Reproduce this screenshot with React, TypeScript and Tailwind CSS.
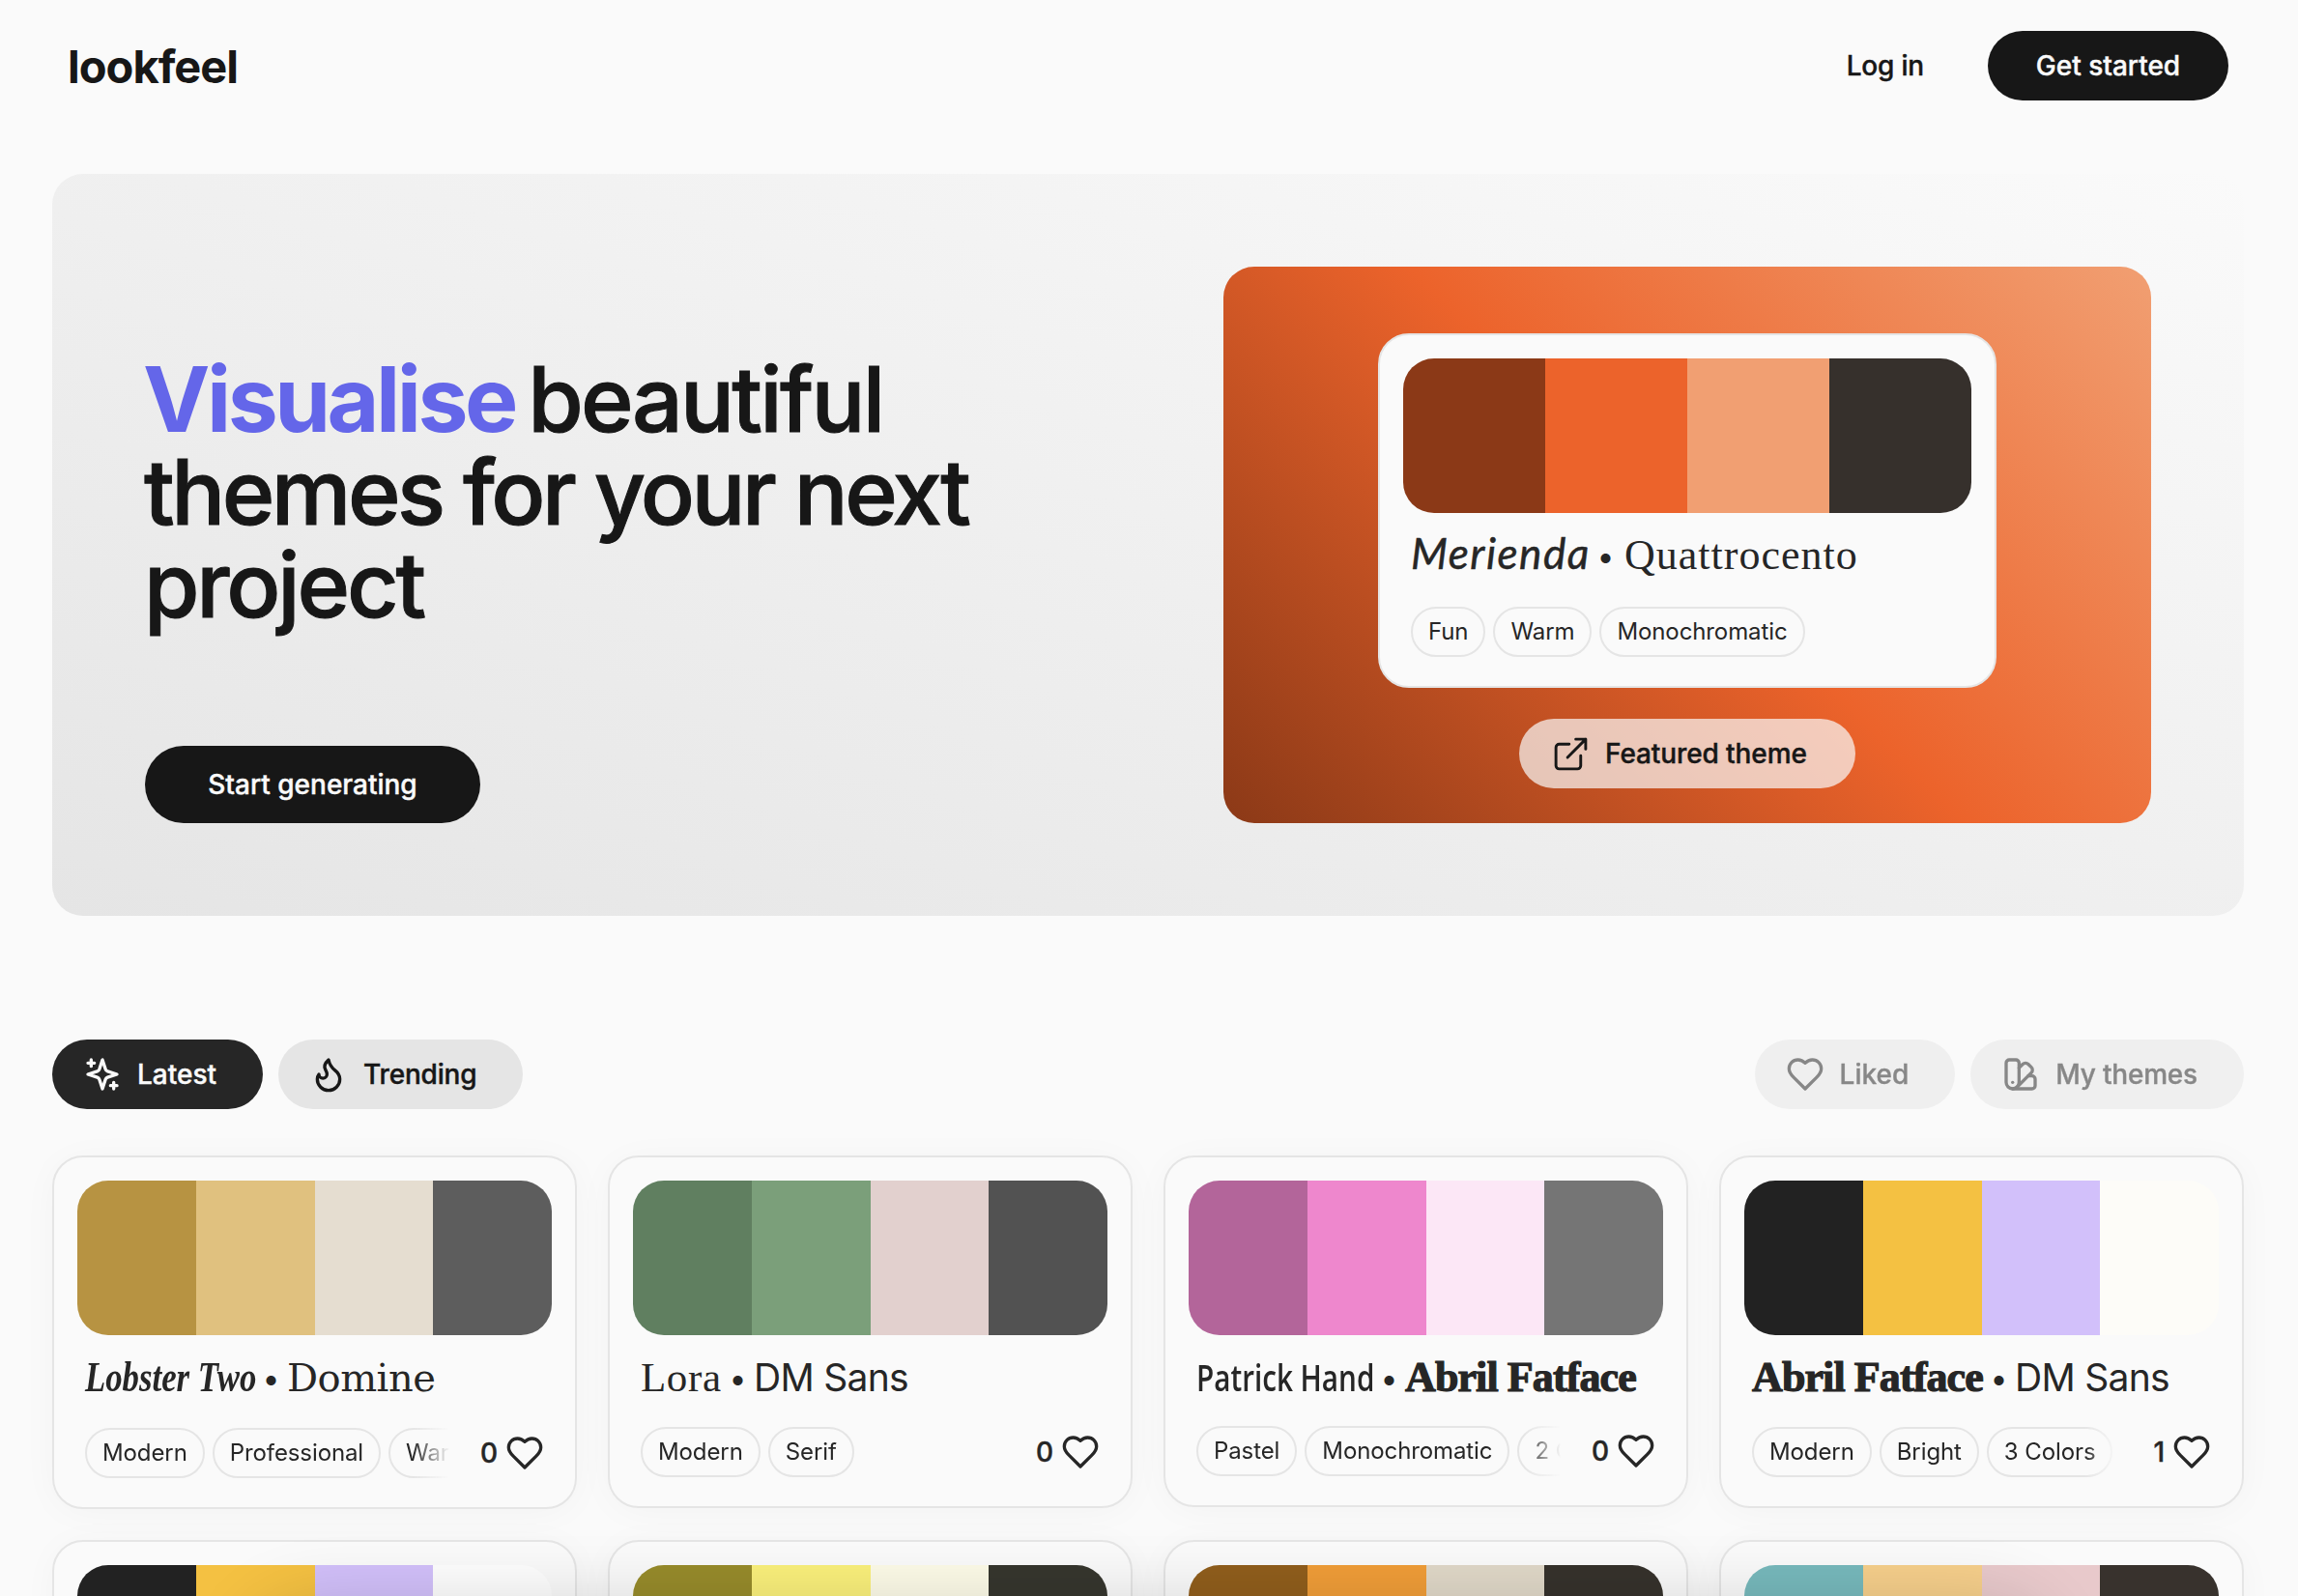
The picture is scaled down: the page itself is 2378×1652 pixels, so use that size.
import type { ReactNode } from "react";

function Icon({ children, look = "size-10", stroke = 2 }: { children: ReactNode; look?: string; stroke?: number }) {
  return (
    <svg
      viewBox="0 0 24 24"
      className={`shrink-0 ${look}`}
      fill="none"
      stroke="currentColor"
      strokeWidth={stroke}
      strokeLinecap="round"
      strokeLinejoin="round"
    >
      {children}
    </svg>
  );
}

const HeartIcon = () => (
  <Icon>
    <path d="M19 14c1.49-1.46 3-3.21 3-5.5A5.5 5.5 0 0 0 16.5 3c-1.76 0-3 .5-4.5 2-1.5-1.5-2.74-2-4.5-2A5.5 5.5 0 0 0 2 8.5c0 2.3 1.5 4.05 3 5.5l7 7Z" />
  </Icon>
);

const SparklesIcon = () => (
  <Icon>
    <path d="m12 3-1.9 5.8a2 2 0 0 1-1.287 1.288L3 12l5.8 1.9a2 2 0 0 1 1.288 1.287L12 21l1.9-5.8a2 2 0 0 1 1.287-1.288L21 12l-5.8-1.9a2 2 0 0 1-1.288-1.287Z" />
    <path d="M5 3v4M19 17v4M3 5h4M17 19h4" />
  </Icon>
);

const FlameIcon = () => (
  <Icon>
    <path d="M8.5 14.5A2.5 2.5 0 0 0 11 12c0-1.38-.5-2-1-3-1.072-2.143-.224-4.054 2-6 .5 2.5 2 4.9 4 6.5 2 1.6 3 3.5 3 5.5a7 7 0 1 1-14 0c0-1.153.433-2.294 1-3a2.5 2.5 0 0 0 2.5 2.5z" />
  </Icon>
);

const SwatchIcon = () => (
  <Icon>
    <path d="M11 17a4 4 0 0 1-8 0V5a2 2 0 0 1 2-2h4a2 2 0 0 1 2 2Z" />
    <path d="M16.7 13H19a2 2 0 0 1 2 2v4a2 2 0 0 1-2 2H7" />
    <path d="M7 17h.01" />
    <path d="m11 8 2.3-2.3a2.4 2.4 0 0 1 3.404.004L18.6 7.6a2.4 2.4 0 0 1 .026 3.434L9.9 19.8" />
  </Icon>
);

const ExternalIcon = () => (
  <Icon look="size-[41px]" stroke={1.7}>
    <path d="M15 3h6v6M10 14 21 3M18 13v6a2 2 0 0 1-2 2H5a2 2 0 0 1-2-2V8a2 2 0 0 1 2-2h6" />
  </Icon>
);

/* Display faces used inside the theme names. */
const merienda = (
  <span className="w-[185px] font-['Lato',sans-serif] text-[44px] italic tracking-[1.5px] [-webkit-text-stroke:0.5px]">
    Merienda
  </span>
);
const quattrocento = (
  <span className="ml-[3px] font-['Liberation_Serif',serif] text-[44px] tracking-[1px]">Quattrocento</span>
);
const lobster = (
  <span className="w-[176px]">
    <span className="inline-block origin-left scale-x-[.79] font-['Liberation_Serif',serif] text-[44px] font-bold italic">
      Lobster Two
    </span>
  </span>
);
const domine = (
  <span className="font-['DejaVu_Serif',serif] text-[40px] tracking-[-0.5px]">Domine</span>
);
const lora = (
  <span className="w-[84px] font-['Liberation_Serif',serif] text-[43px] tracking-[0.6px]">Lora</span>
);
const dmSans = <span className="text-[39px] tracking-[-0.7px]">DM Sans</span>;
const patrick = (
  <span className="w-[183px]">
    <span className="inline-block origin-left scale-x-[.78] font-['Open_Sans',sans-serif] text-[38px] font-semibold">
      Patrick Hand
    </span>
  </span>
);
const abril = (
  <span className="w-[239px] font-['Liberation_Serif',serif] text-[44px] font-bold tracking-[-0.9px] [-webkit-text-stroke:1.2px]">
    Abril Fatface
  </span>
);

function Swatches({ colors }: { colors: string[] }) {
  return (
    <div className="flex h-40 overflow-hidden rounded-[32px]">
      {colors.map((c, i) => (
        <div key={i} className="flex-1" style={{ backgroundColor: c }} />
      ))}
    </div>
  );
}

function Names({ first, second, height }: { first: ReactNode; second: ReactNode; height: string }) {
  return (
    <div className={`mt-[7px] flex items-baseline px-2 whitespace-nowrap leading-[40px] ${height}`}>
      {first}
      <span className="w-[33px] shrink-0 -translate-y-0.5 text-center text-[32px] leading-[79px]">•</span>
      {second}
    </div>
  );
}

function Chip({ children }: { children: ReactNode }) {
  return (
    <span className="flex h-[52px] shrink-0 items-center rounded-full border-2 border-neutral-200 px-4 text-2xl tracking-[-0.1px] whitespace-nowrap">
      {children}
    </span>
  );
}

type Theme = {
  colors: string[];
  first?: ReactNode;
  second?: ReactNode;
  height?: string;
  tags?: string[];
  likes?: number;
};

const themes: Theme[] = [
  { colors: ["#b79342", "#e0c17f", "#e5ddd0", "#5d5d5d"], first: lobster, second: domine, height: "h-[81px]", tags: ["Modern", "Professional", "Warm"], likes: 0 },
  { colors: ["#607f60", "#7b9f7a", "#e2d0ce", "#525252"], first: lora, second: dmSans, height: "h-[80px]", tags: ["Modern", "Serif"], likes: 0 },
  { colors: ["#b3659a", "#ee87cd", "#fce7f6", "#757575"], first: patrick, second: abril, height: "h-[79px]", tags: ["Pastel", "Monochromatic", "2 Colors"], likes: 0 },
  { colors: ["#222222", "#f4c142", "#d2c0fa", "#fdfcf8"], first: abril, second: dmSans, height: "h-[80px]", tags: ["Modern", "Bright", "3 Colors"], likes: 1 },
  { colors: ["#222222", "#f4c142", "#d2c0fa", "#fefefe"] },
  { colors: ["#978b2b", "#faf07b", "#fdfbe8", "#36362e"] },
  { colors: ["#905e1c", "#f09d38", "#e0d8c8", "#36322c"] },
  { colors: ["#77b9bc", "#f6cf8b", "#e8c9cb", "#38322d"] },
];

function ThemeCard({ colors, first, second, height, tags, likes }: Theme) {
  return (
    <article className="min-h-[364px] rounded-[32px] border-2 border-neutral-200 bg-neutral-50 p-6 pb-[30px] shadow-[0_4px_40px_-4px_rgba(0,0,0,0.04)]">
      <Swatches colors={colors} />
      {tags && (
        <>
          <Names first={first} second={second} height={height ?? "h-[80px]"} />
          <div className="mt-2 flex items-center px-2">
            <div className="flex min-w-0 flex-1 gap-2 overflow-hidden [mask-image:linear-gradient(to_right,black_90%,transparent)]">
              {tags.map((t) => (
                <Chip key={t}>{t}</Chip>
              ))}
            </div>
            <div className="ml-8 flex items-center gap-2 text-[28px] font-medium [-webkit-text-stroke:0.4px]">
              {likes}
              <HeartIcon />
            </div>
          </div>
        </>
      )}
    </article>
  );
}

function Tab({ icon, label, look }: { icon: ReactNode; label: string; look: string }) {
  return (
    <button
      className={`flex h-[72px] items-center gap-4 rounded-full pr-12 pl-8 text-[28px] font-medium [-webkit-text-stroke:0.4px] ${look}`}
    >
      {icon}
      {label}
    </button>
  );
}

export default function App() {
  return (
    <div className="relative h-[1652px] overflow-hidden bg-neutral-50 font-['Inter',sans-serif] text-neutral-800">
      <header className="flex h-[180px] items-start justify-between pt-8 pr-[72px] pl-[70px]">
        <div className="flex h-[74px] items-center text-[47px] font-bold tracking-[-1px] text-neutral-900">lookfeel</div>
        <nav className="flex items-center gap-[66px] text-[28px] font-medium [-webkit-text-stroke:0.4px]">
          <a className="tracking-[-0.2px] text-neutral-900">Log in</a>
          <button className="h-[72px] w-[249px] rounded-full bg-neutral-900 text-neutral-50">Get started</button>
        </nav>
      </header>

      <main className="pr-14 pl-[54px]">
        <section className="flex h-[768px] justify-between rounded-[32px] bg-[linear-gradient(to_top_right,#e5e5e5,#fafafa)] p-24">
          <div className="flex flex-col items-start justify-end">
            <h1 className="mb-[119px] -ml-px text-[93px] leading-[96px] font-medium tracking-[-3.5px] text-neutral-900 [-webkit-text-stroke:1px]">
              <span className="mr-[-8px] -ml-px font-bold tracking-[-3.5px] text-[#6466e9] [-webkit-text-stroke:0px]">
                Visualise
              </span>{" "}
              <span className="tracking-[-2.7px]">beautiful</span>
              <br />
              themes for your next
              <br />
              <span className="tracking-[-3.2px]">project</span>
            </h1>
            <button className="h-20 w-[347px] rounded-full bg-neutral-900 text-[28px] font-medium text-neutral-50 [-webkit-text-stroke:0.4px]">
              Start generating
            </button>
          </div>

          <div className="flex w-[960px] flex-col items-center rounded-[32px] bg-[linear-gradient(45deg,#8b3917,#ec632b_50%,#f19f72)] pt-[69px]">
            <div className="h-[367px] w-[640px] rounded-[32px] border-2 border-neutral-200 bg-neutral-50 p-6">
              <Swatches colors={["#8b3917", "#ec632b", "#f19f72", "#36302c"]} />
              <Names first={merienda} second={quattrocento} height="h-[82px]" />
              <div className="mt-2 flex gap-2 px-2">
                <Chip>Fun</Chip>
                <Chip>Warm</Chip>
                <Chip>Monochromatic</Chip>
              </div>
            </div>
            <button className="mt-8 flex h-[72px] w-[348px] items-center gap-[15px] rounded-full bg-neutral-50/70 pl-[33px] text-[28px] font-medium tracking-[-0.1px] whitespace-nowrap text-neutral-900 [-webkit-text-stroke:0.4px]">
              <ExternalIcon />
              Featured theme
            </button>
          </div>
        </section>

        <div className="mt-32 flex justify-between">
          <div className="flex gap-4">
            <Tab icon={<SparklesIcon />} label="Latest" look="bg-neutral-800 text-neutral-50" />
            <Tab icon={<FlameIcon />} label="Trending" look="bg-neutral-200 text-neutral-900 tracking-[-0.2px]" />
          </div>
          <div className="flex gap-4">
            <Tab icon={<HeartIcon />} label="Liked" look="bg-neutral-200 text-neutral-900 opacity-50" />
            <Tab icon={<SwatchIcon />} label="My themes" look="bg-neutral-200 text-neutral-900 opacity-50 tracking-[-0.2px]" />
          </div>
        </div>

        <div className="mt-12 grid grid-cols-4 items-start gap-8">
          {themes.map((t, i) => (
            <ThemeCard key={i} {...t} />
          ))}
        </div>
      </main>

      {/* Shadow cast by the floating bar that sits just under the fold */}
      <div className="absolute inset-x-[250px] top-[1654px] h-40 rounded-[80px] shadow-[0_0_70px_rgba(0,0,0,0.14)]" />
    </div>
  );
}
